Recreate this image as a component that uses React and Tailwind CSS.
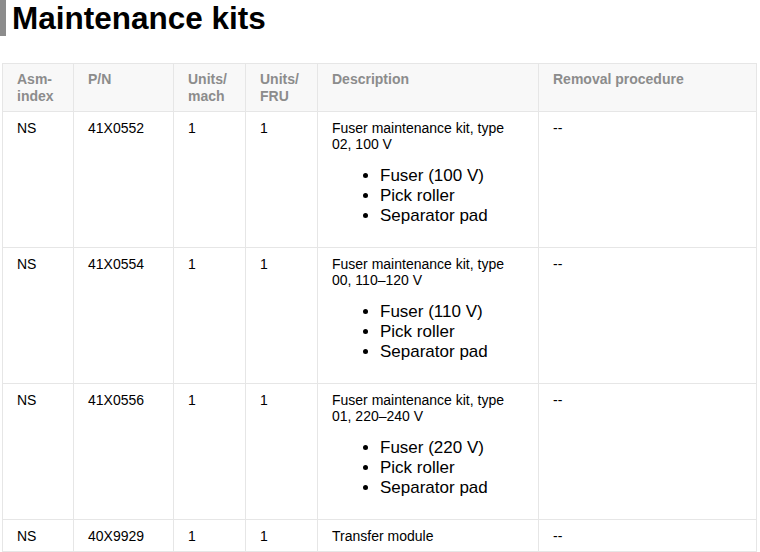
import React from 'react';

const rows = [
  {
    asm: 'NS',
    pn: '41X0552',
    mach: '1',
    fru: '1',
    desc: 'Fuser maintenance kit, type 02, 100 V',
    items: ['Fuser (100 V)', 'Pick roller', 'Separator pad'],
  },
  {
    asm: 'NS',
    pn: '41X0554',
    mach: '1',
    fru: '1',
    desc: 'Fuser maintenance kit, type 00, 110–120 V',
    items: ['Fuser (110 V)', 'Pick roller', 'Separator pad'],
  },
  {
    asm: 'NS',
    pn: '41X0556',
    mach: '1',
    fru: '1',
    desc: 'Fuser maintenance kit, type 01, 220–240 V',
    items: ['Fuser (220 V)', 'Pick roller', 'Separator pad'],
  },
  {
    asm: 'NS',
    pn: '40X9929',
    mach: '1',
    fru: '1',
    desc: 'Transfer module',
    items: [],
  },
];

const th = 'border border-[#e6e6e6] px-[14px] pt-[7px] pb-[6px] text-left align-top font-bold text-[14px] leading-[17px] text-[#8c8c8c]';
const td = 'border border-[#e6e6e6] px-[14px] pt-[8px] pb-[7px] align-top text-[14px] leading-[16px] text-black';

export default function App() {
  return (
    <div className="bg-white h-[552px] overflow-hidden" style={{ fontFamily: '"Liberation Sans", Arial, sans-serif' }}>
      <h1 className="border-l-[6px] border-[#8c8c8c] pl-[6px] text-[31.5px] leading-[36px] font-bold text-black">
        Maintenance kits
      </h1>
      <table className="mt-[27px] ml-[2px] w-[755px] border-collapse table-fixed">
        <colgroup>
          <col className="w-[71px]" />
          <col className="w-[100px]" />
          <col className="w-[72px]" />
          <col className="w-[72px]" />
          <col className="w-[221px]" />
          <col />
        </colgroup>
        <thead>
          <tr className="bg-[#f8f8f8]">
            <th className={th}>Asm-<br />index</th>
            <th className={th}>P/N</th>
            <th className={th}>Units/<br />mach</th>
            <th className={th}>Units/<br />FRU</th>
            <th className={th}>Description</th>
            <th className={th}>Removal procedure</th>
          </tr>
        </thead>
        <tbody>
          {rows.map((r) => (
            <tr key={r.pn}>
              <td className={td}>{r.asm}</td>
              <td className={td}>{r.pn}</td>
              <td className={td}>{r.mach}</td>
              <td className={td}>{r.fru}</td>
              <td className={td}>
                <div>{r.desc}</div>
                {r.items.length > 0 && (
                  <ul className="list-disc pl-[48px] my-[14px] text-[17px] leading-[20px]">
                    {r.items.map((it) => (
                      <li key={it}>{it}</li>
                    ))}
                  </ul>
                )}
              </td>
              <td className={td}>--</td>
            </tr>
          ))}
        </tbody>
      </table>
    </div>
  );
}
